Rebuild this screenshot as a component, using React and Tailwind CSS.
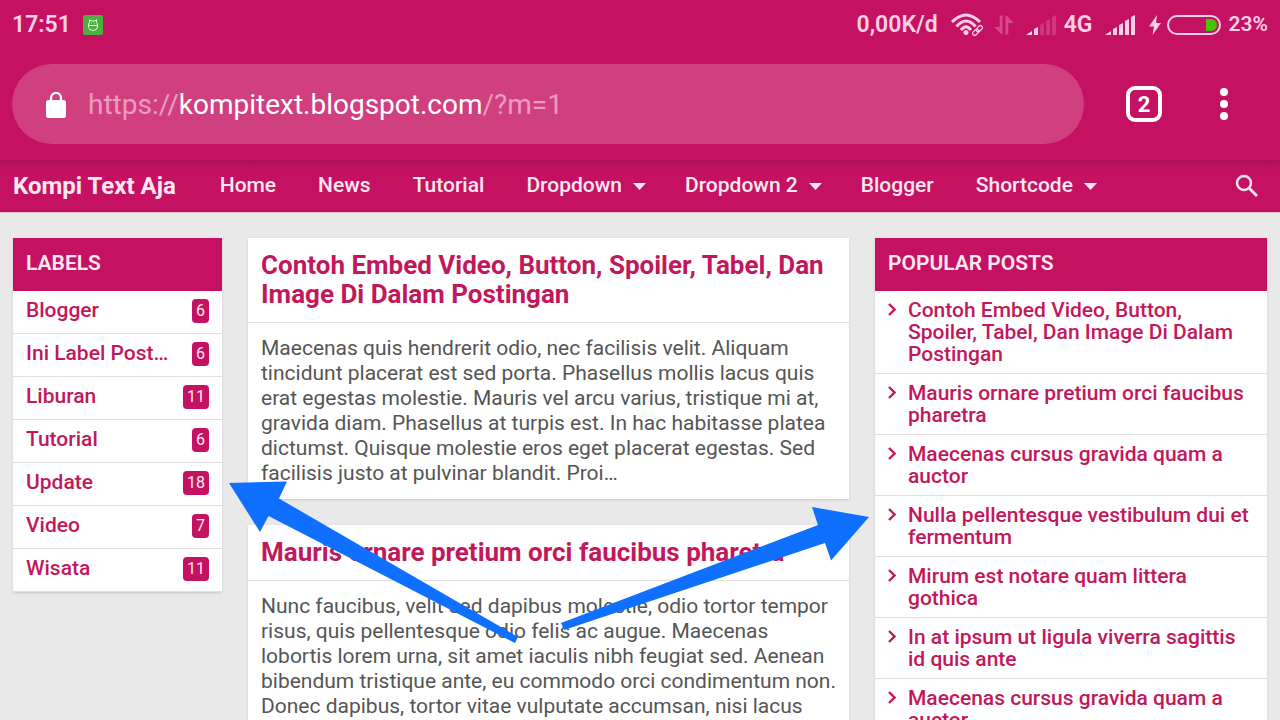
import { useState } from "react";

const navItems = [
  { label: "Home" },
  { label: "News" },
  { label: "Tutorial" },
  { label: "Dropdown", menu: true },
  { label: "Dropdown 2", menu: true },
  { label: "Blogger" },
  { label: "Shortcode", menu: true },
];

const labels = [
  { name: "Blogger", count: 6 },
  { name: "Ini Label Post…", count: 6 },
  { name: "Liburan", count: 11 },
  { name: "Tutorial", count: 6 },
  { name: "Update", count: 18 },
  { name: "Video", count: 7 },
  { name: "Wisata", count: 11 },
];

const posts = [
  {
    title: "Contoh Embed Video, Button, Spoiler, Tabel, Dan Image Di Dalam Postingan",
    text: "Maecenas quis hendrerit odio, nec facilisis velit. Aliquam tincidunt placerat est sed porta. Phasellus mollis lacus quis erat egestas molestie. Mauris vel arcu varius, tristique mi at, gravida diam. Phasellus at turpis est. In hac habitasse platea dictumst. Quisque molestie eros eget placerat egestas. Sed facilisis justo at pulvinar blandit. Proi…",
  },
  {
    title: "Mauris ornare pretium orci faucibus pharetra",
    text: "Nunc faucibus, velit sed dapibus molestie, odio tortor tempor risus, quis pellentesque odio felis ac augue. Maecenas lobortis lorem urna, sit amet iaculis nibh feugiat sed. Aenean bibendum tristique ante, eu commodo orci condimentum non. Donec dapibus, tortor vitae vulputate accumsan, nisi lacus",
  },
];

const popular = [
  "Contoh Embed Video, Button, Spoiler, Tabel, Dan Image Di Dalam Postingan",
  "Mauris ornare pretium orci faucibus pharetra",
  "Maecenas cursus gravida quam a auctor",
  "Nulla pellentesque vestibulum dui et fermentum",
  "Mirum est notare quam littera gothica",
  "In at ipsum ut ligula viverra sagittis id quis ante",
  "Maecenas cursus gravida quam a auctor",
];

function SignalIcon({ level }) {
  const bars = [
    "M0 20L6 16V20Z",
    "M8 14L12 12V20H8Z",
    "M14 10L18 8V20H14Z",
    "M20 6L24 4V20H20Z",
    "M26 2L30 0V20H26Z",
  ];
  return (
    <svg width="30" height="20" viewBox="0 0 30 20" fill="#fbcfe5" aria-hidden="true">
      {bars.map((d, i) => (
        <path key={d} d={d} opacity={i < level ? 1 : 0.2} />
      ))}
    </svg>
  );
}

function StatusBar() {
  return (
    <div className="flex h-[50px] items-center justify-between px-3 text-[23px] font-semibold text-[#fbcfe5]">
      <div className="flex items-center gap-3">
        <span>17:51</span>
        <svg width="20" height="20" viewBox="0 0 20 20" fill="none" stroke="#e4f6df" aria-hidden="true">
          <rect width="20" height="20" rx="2" fill="#4caf3f" stroke="none" />
          <path d="M6.5 4.5V7.5L5.5 9V12Q6 15.5 10 15.5T14.5 12V9L13.5 7.5V4.5L12 6H8ZM5.5 10.5H14.5M8 8.5H8.5M11.5 8.5H12" />
        </svg>
      </div>
      <div className="flex items-center">
        <span className="mr-3">0,00K/d</span>
        <svg className="mr-2.5" width="34" height="24" viewBox="0 0 34 24" fill="none" stroke="#fbcfe5" aria-hidden="true">
          <path d="M2 9Q16 -5 30 9" strokeWidth="3" />
          <path d="M6.500 13.500Q16 2.500 25.500 13.500" strokeWidth="3" />
          <path d="M11 17Q16 10.500 21 17" strokeWidth="3" />
          <circle cx="16" cy="19.500" r="2.500" fill="#fbcfe5" stroke="none" />
          <g transform="rotate(-45 27.500 17.500)" strokeWidth="1.300">
            <rect x="21.500" y="15.500" width="7" height="4" rx="2" />
            <rect x="26.500" y="15.500" width="7" height="4" rx="2" />
          </g>
        </svg>
        <svg className="mr-3" width="20" height="20" viewBox="0 0 21 20" fill="#fbcfe5" opacity="0.3" aria-hidden="true">
          <path d="M6 0H9V20H8L0 12H6ZM12 0H13L21 8H15V20H12Z" />
        </svg>
        <SignalIcon level={2} />
        <span className="ml-2 mr-3">4G</span>
        <SignalIcon level={5} />
        <svg className="ml-3.5 mr-1.5" width="12" height="20" viewBox="0 0 12 20" fill="#fbcfe5" aria-hidden="true">
          <path d="M8 0L0 11.500H5L3.500 20L12 8H7Z" />
        </svg>
        <svg className="mr-2" width="54" height="20" viewBox="0 0 54 20" fill="none" aria-hidden="true">
          <rect x="1" y="1" width="52" height="18" rx="9" stroke="#fbcfe5" strokeWidth="2" />
          <path d="M39 4H44A6 6 0 0 1 44 16H39Z" fill="#46c405" />
        </svg>
        <span className="text-[21px]">23%</span>
      </div>
    </div>
  );
}

function BrowserBar() {
  const [host, setHost] = useState("kompitext.blogspot.com");
  return (
    <div className="flex items-center pb-4 pl-3 pr-[52px] pt-[14px]">
      <label className="flex h-20 flex-1 items-center rounded-full bg-[#d0407f] pl-[34px] pt-[2px] text-[28px] text-[#ec9cc0]">
        <svg className="mr-[22px]" width="20" height="26" viewBox="0 0 20 26" aria-hidden="true">
          <path d="M5 10V6a5 5 0 0 1 10 0V10" fill="none" stroke="#fff" strokeWidth="2.200" />
          <rect y="8" width="20" height="18" rx="2.500" fill="#fff" />
        </svg>
        <span>https://</span>
        <input
          aria-label="Address"
          className="field-sizing-content text-white outline-none"
          value={host}
          onChange={(e) => setHost(e.target.value)}
        />
        <span>/?m=1</span>
      </label>
      <button
        aria-label="Open tabs"
        className="ml-[42px] flex size-9 items-center justify-center rounded-[9px] border-4 border-white text-[22px] font-bold text-white"
      >
        2
      </button>
      <button aria-label="More options" className="ml-[58px] flex flex-col gap-1">
        <span className="size-2 rounded-full bg-white" />
        <span className="size-2 rounded-full bg-white" />
        <span className="size-2 rounded-full bg-white" />
      </button>
    </div>
  );
}

function SiteNav() {
  return (
    <nav className="flex h-[53px] items-center border-b border-[#e6c3d2] bg-linear-to-b from-[#ac1157] to-[#c51162] to-20% pl-[13px] pr-[21px] text-[#fde8f1]">
      <a href="#" className="mr-11 text-[24px] font-bold leading-7">
        Kompi Text Aja
      </a>
      <ul className="flex flex-1 items-center gap-[42px] text-[21px] font-medium">
        {navItems.map((item) => (
          <li key={item.label}>
            <a href="#" className="flex items-center gap-[11px]">
              {item.label}
              {item.menu && (
                <svg className="-mr-[3px]" width="13" height="7" viewBox="0 0 13 7" fill="currentColor" aria-hidden="true">
                  <path d="M0 0H13L6.500 7Z" />
                </svg>
              )}
            </a>
          </li>
        ))}
      </ul>
      <button aria-label="Search">
        <svg width="24" height="24" viewBox="0 0 24 24" fill="none" stroke="currentColor" strokeWidth="2.400" aria-hidden="true">
          <circle cx="9" cy="9" r="7" />
          <path d="M14 14L22 22" strokeWidth="3" />
        </svg>
      </button>
    </nav>
  );
}

function Widget({ title, children }) {
  return (
    <section className="bg-white shadow-sm">
      <h2 className="flex h-[53px] items-center bg-[#c51162] px-[13px] pb-0.5 text-[21px] font-semibold text-[#fde8f1]">{title}</h2>
      {children}
    </section>
  );
}

function Arrows() {
  return (
    <svg className="pointer-events-none absolute inset-0 size-full" viewBox="0 0 1280 720" fill="#0f6fff" aria-hidden="true">
      <path d="M229 483L287 481.500L279 498.500L518 637L515 643L268.500 516L260 532Z" />
      <path d="M869 517L812 507L818 525L561 623L564 630L825 543L831 560.500Z" />
    </svg>
  );
}

export default function App() {
  return (
    <div className="relative flex h-screen flex-col overflow-hidden bg-[#e9e9e9] font-[Roboto,sans-serif]">
      <header className="shrink-0 bg-[#c51162]">
        <StatusBar />
        <BrowserBar />
        <SiteNav />
      </header>

      <main className="grid grid-cols-[209px_1fr_392px] items-start gap-[26px] px-[13px] pt-[25px]">
        <Widget title="LABELS">
          <ul>
            {labels.map((label) => (
              <li key={label.name} className="flex h-[43px] items-center justify-between border-b border-[#e0e0e0] px-[13px] pb-0.5">
                <a href="#" className="text-[21px] font-medium text-[#c2185b]">
                  {label.name}
                </a>
                <span className="rounded-[4px] bg-[#c51162] px-1 text-[16px] leading-6 text-[#fde8f1]">{label.count}</span>
              </li>
            ))}
          </ul>
        </Widget>

        <div className="flex flex-col gap-[26px]">
          {posts.map((post) => (
            <article key={post.title} className="bg-white shadow-sm">
              <h2 className="border-b border-[#e0e0e0] p-[13px] text-[26px] font-bold leading-[29px] text-[#c2185b]">
                <a href="#">{post.title}</a>
              </h2>
              <p className="p-[13px] text-[21px] leading-[25px] text-[#555]">{post.text}</p>
            </article>
          ))}
        </div>

        <Widget title="POPULAR POSTS">
          <ul>
            {popular.map((title, i) => (
              <li key={i} className="flex items-start border-b border-[#e0e0e0] px-[13px] py-2">
                <svg className="mr-3 mt-1 shrink-0" width="8" height="13" viewBox="0 0 8 13" fill="none" stroke="#c2185b" strokeWidth="2.400" aria-hidden="true">
                  <path d="M1 1L6.500 6.500L1 12" />
                </svg>
                <a href="#" className="text-[21px] font-medium leading-[22px] text-[#c2185b]">
                  {title}
                </a>
              </li>
            ))}
          </ul>
        </Widget>
      </main>

      <Arrows />
    </div>
  );
}
